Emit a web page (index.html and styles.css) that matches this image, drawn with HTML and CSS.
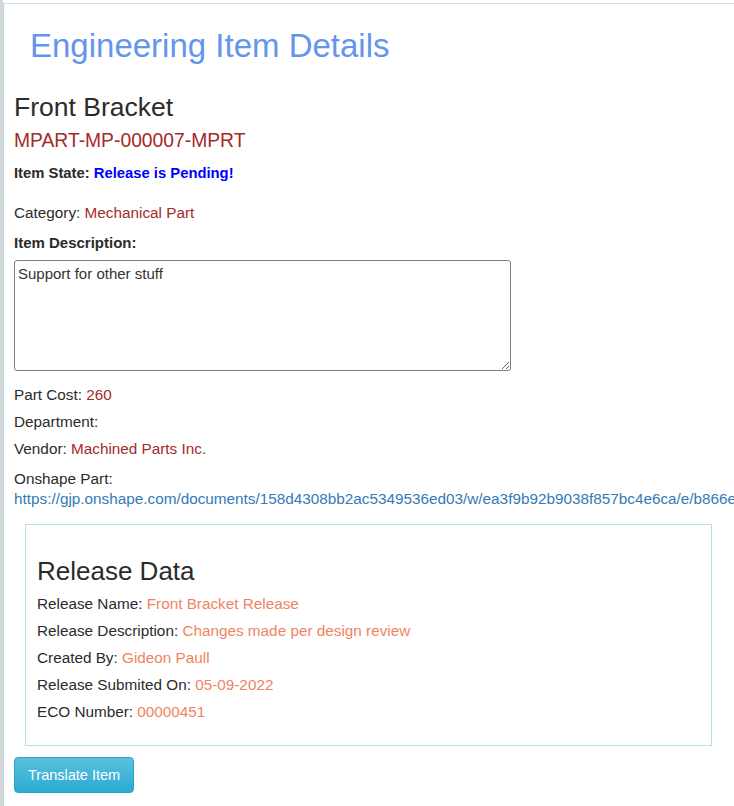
FILE: index.html
```html
<!DOCTYPE html>
<html>
<head>
<meta charset="utf-8">
<link rel="stylesheet" href="styles.css">
</head>
<body>
<div class="strip"></div>
<div class="page">
  <h1 class="title">Engineering Item Details</h1>
  <h2 class="item-name">Front Bracket</h2>
  <h3 class="item-number">MPART-MP-000007-MPRT</h3>
  <p class="state"><b>Item State:</b> <span class="pending">Release is Pending!</span></p>
  <p class="row cat">Category: <span class="val">Mechanical Part</span></p>
  <p class="desc-label"><b>Item Description:</b></p>
  <textarea class="desc">Support for other stuff</textarea>
  <p class="row after-desc">Part Cost: <span class="val">260</span></p>
  <p class="row">Department:</p>
  <p class="row">Vendor: <span class="val">Machined Parts Inc.</span></p>
  <p class="row onshape">Onshape Part:<br><a class="link" href="#">https://gjp.onshape.com/documents/158d4308bb2ac5349536ed03/w/ea3f9b92b9038f857bc4e6ca/e/b866ee4a1c2d3e5f6a7b</a></p>
  <div class="release">
    <h2 class="release-title">Release Data</h2>
    <p class="row">Release Name: <span class="rval">Front Bracket Release</span></p>
    <p class="row">Release Description: <span class="rval">Changes made per design review</span></p>
    <p class="row">Created By: <span class="rval">Gideon Paull</span></p>
    <p class="row">Release Submited On: <span class="rval">05-09-2022</span></p>
    <p class="row">ECO Number: <span class="rval">00000451</span></p>
  </div>
  <button class="btn">Translate Item</button>
</div>
</body>
</html>
```
FILE: styles.css
```css
html, body {
  margin: 0;
  padding: 0;
  overflow: hidden;
  background: #fff;
  height: 100%;
}
body {
  display: flex;
  font-family: "Liberation Sans", Arial, sans-serif;
  color: #2b2b2b;
  font-size: 15.3px;
}
.strip {
  width: 3px;
  flex: none;
  background: #d6d6d6;
}
.page {
  flex: 1;
  min-width: 0;
  margin-top: 3px;
  border-top: 1px solid #c6e3ef;
  border-left: 1px solid #b5d8e7;
  padding-left: 10px;
  white-space: nowrap;
  overflow: hidden;
}
.title {
  margin: 22px 0 0 16px;
  font-size: 33px;
  font-weight: normal;
  color: #6495ed;
  line-height: 40px;
}
.item-name {
  margin: 25px 0 0;
  font-size: 26.5px;
  font-weight: normal;
  line-height: 32px;
}
.item-number {
  margin: 5px 0 0;
  font-size: 19.3px;
  font-weight: normal;
  color: #a52a2a;
  line-height: 26px;
}
p { margin: 0; }
.state {
  margin-top: 9px;
  line-height: 20px;
  font-size: 14.8px;
  font-weight: bold;
}
.pending { color: #0000ff; }
.row {
  line-height: 20px;
  margin-top: 7px;
}
.cat { margin-top: 20px; }
.val { color: #a52a2a; }
.desc-label { margin-top: 10px; line-height: 20px; font-size: 15px; }
.desc {
  display: block;
  margin-top: 7px;
  width: 497px;
  height: 111px;
  box-sizing: border-box;
  border: 1px solid #808080;
  border-radius: 3px;
  padding: 4px 3px 2px;
  font-family: "Liberation Sans", Arial, sans-serif;
  font-size: 15px;
  color: #333;
  resize: vertical;
}
.after-desc { margin-top: 14px; }
.onshape { margin-top: 10px; }
.link { color: #337ab7; text-decoration: none; }
.release {
  margin: 15px 22px 0 11px;
  border: 1px solid #b8dfee;
  padding: 18px 11px 23px;
  white-space: normal;
}
.release-title {
  margin: 12px 0 0;
  font-size: 26px;
  font-weight: normal;
  line-height: 32px;
}
.rval { color: #f0845f; }
.btn {
  margin-top: 11px;
  height: 36px;
  padding: 0 13px;
  border: 1px solid #28a4c9;
  border-radius: 4px;
  background: linear-gradient(#5bc0de, #2aabd2);
  color: #fff;
  font-family: "Liberation Sans", Arial, sans-serif;
  font-size: 14.5px;
}
```
